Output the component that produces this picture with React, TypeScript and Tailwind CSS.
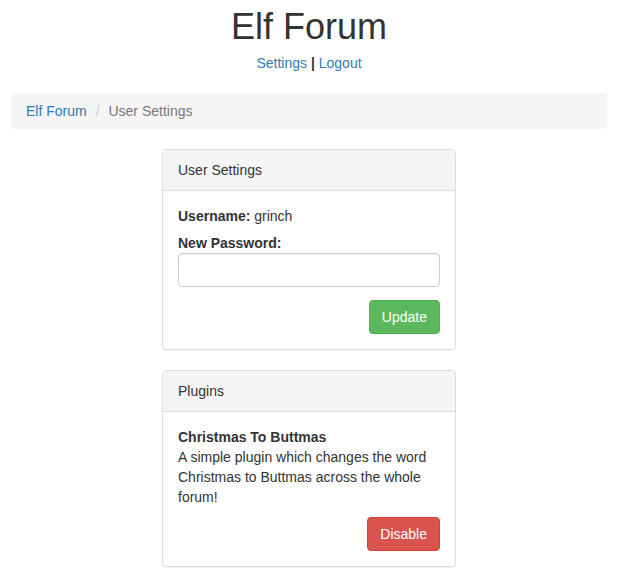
export default function App() {
  return (
    <div className="min-h-[581px] bg-white text-[#333] text-[14px] leading-[20px]" style={{ fontFamily: '"Liberation Sans", Arial, Helvetica, sans-serif' }}>
      <div className="ml-[11px] mr-[17px]">
        <div className="text-center pt-[7px]">
          <h1 className="text-[36px] leading-[40px] font-normal text-[#333]">Elf Forum</h1>
          <div className="mt-[6px]">
            <a className="text-[#337ab7]">Settings</a> <span className="font-bold">|</span> <a className="text-[#337ab7]">Logout</a>
          </div>
        </div>
        <div className="mt-[20px] bg-[#f5f5f5] rounded-[4px] px-[15px] py-[8px] flex items-center whitespace-pre">
          <a className="text-[#337ab7]">Elf Forum</a>
          <span className="text-[#ccc] pl-[9px] pr-[5px]">/{"\u00a0"}</span>
          <span className="text-[#777]">User Settings</span>
        </div>
        <div className="w-[294px] mx-auto mt-[20px]">
          <div className="border border-[#ddd] rounded-[4px] shadow-[0_1px_1px_rgba(0,0,0,0.05)] bg-white">
            <div className="bg-[#f5f5f5] border-b border-[#ddd] rounded-t-[3px] px-[15px] py-[10px]">User Settings</div>
            <div className="p-[15px]">
              <div><span className="font-bold">Username:</span> grinch</div>
              <div className="mt-[7px] font-bold">New Password:</div>
              <input type="password" className="block w-full h-[34px] border border-[#ccc] rounded-[4px] shadow-[inset_0_1px_1px_rgba(0,0,0,0.075)] px-[12px] outline-none" />
              <div className="flex justify-end mt-[13px]">
                <button className="h-[34px] px-[12px] bg-[#5cb85c] border border-[#4cae4c] rounded-[4px] text-white">Update</button>
              </div>
            </div>
          </div>
          <div className="mt-[20px] border border-[#ddd] rounded-[4px] shadow-[0_1px_1px_rgba(0,0,0,0.05)] bg-white">
            <div className="bg-[#f5f5f5] border-b border-[#ddd] rounded-t-[3px] px-[15px] py-[10px]">Plugins</div>
            <div className="p-[15px]">
              <div className="font-bold">Christmas To Buttmas</div>
              <div>A simple plugin which changes the word Christmas to Buttmas across the whole forum!</div>
              <div className="flex justify-end mt-[10px]">
                <button className="h-[34px] px-[12px] bg-[#d9534f] border border-[#d43f3a] rounded-[4px] text-white">Disable</button>
              </div>
            </div>
          </div>
        </div>
      </div>
    </div>
  );
}
